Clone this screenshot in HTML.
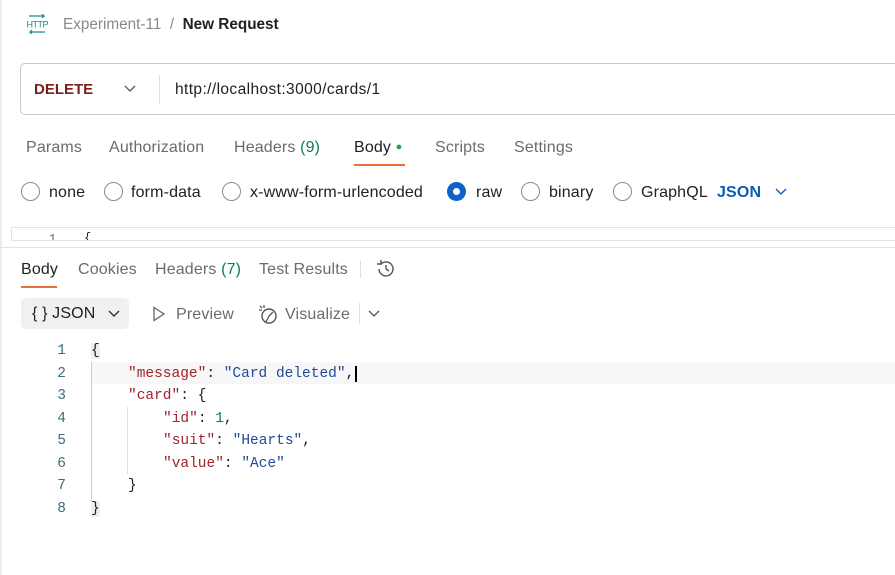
<!DOCTYPE html>
<html><head><style>
*{margin:0;padding:0;box-sizing:border-box}
body{width:895px;height:575px;background:#fff;font-family:"Liberation Sans",sans-serif;color:#212121;position:relative;overflow:hidden;font-size:16px;letter-spacing:0.15px}
.a{position:absolute;white-space:nowrap}
.g{color:#6b6b6b}
.radio{position:absolute;width:19px;height:19px;border:1.5px solid #8a8a8a;border-radius:50%}
.code{font-family:"Liberation Mono","DejaVu Sans Mono",monospace;font-size:14.5px;letter-spacing:0}
.k{color:#a1232b}.s{color:#1f4b99}.n{color:#107a5b}
.ln{position:absolute;width:20px;text-align:right;left:46px;color:#3d6d80;font-family:"Liberation Mono",monospace;font-size:14.5px;letter-spacing:0}
</style></head><body>
<div class="a" style="left:0;top:0;width:2px;height:575px;background:#ececec"></div>
<svg class="a" style="left:26px;top:14px" width="22" height="20" viewBox="0 0 22 20"><path d="M3 2h15l-2-2M18 2l-2 2M19 18H4l2-2M4 18l2 2" stroke="#1a8a8a" fill="none" stroke-width="1.2"/><text x="0.5" y="13.5" font-size="9" font-family="Liberation Sans" fill="#1a8a8a" letter-spacing="-0.5">HTTP</text></svg>
<div class="a g" style="left:63px;top:16px;font-size:15.3px;letter-spacing:0;color:#8a8a8a">Experiment-11&nbsp;&nbsp;/&nbsp;&nbsp;<span style="color:#212121;font-weight:bold">New Request</span></div>
<div class="a" style="left:20px;top:63px;width:890px;height:52px;border:1px solid #c9c9c9;border-radius:5px"></div>
<div class="a" style="left:34px;top:81px;font-weight:bold;color:#7a1f1f;font-size:15px;letter-spacing:0">DELETE</div>
<svg class="a" style="left:124px;top:85px" width="12" height="8"><path d="M1 1l5 5 5-5" stroke="#555" fill="none" stroke-width="1.3"/></svg>
<div class="a" style="left:159px;top:75px;width:1px;height:29px;background:#ddd"></div>
<div class="a" style="left:175px;top:81px;font-size:15.5px;letter-spacing:0.4px">http://localhost:3000/cards/1</div>
<div class="a g" style="left:26px;top:139px">Params</div>
<div class="a g" style="left:109px;top:139px">Authorization</div>
<div class="a g" style="left:234px;top:139px">Headers <span style="color:#107a5b">(9)</span></div>
<div class="a" style="left:354px;top:139px">Body <span style="color:#1fa34a;font-size:11px;vertical-align:2px">●</span></div>
<div class="a" style="left:354px;top:164px;width:51px;height:2px;background:#e8703a"></div>
<div class="a g" style="left:435px;top:139px">Scripts</div>
<div class="a g" style="left:514px;top:139px">Settings</div>
<div class="radio" style="left:21px;top:182px"></div><div class="a" style="left:49px;top:184px">none</div>
<div class="radio" style="left:104px;top:182px"></div><div class="a" style="left:131px;top:184px">form-data</div>
<div class="radio" style="left:222px;top:182px"></div><div class="a" style="left:250px;top:184px">x-www-form-urlencoded</div>
<div class="a" style="left:447px;top:182px;width:19px;height:19px;border-radius:50%;background:#0b63c5"><div style="position:absolute;left:6px;top:6px;width:7px;height:7px;border-radius:50%;background:#fff"></div></div><div class="a" style="left:476px;top:184px">raw</div>
<div class="radio" style="left:521px;top:182px"></div><div class="a" style="left:549px;top:184px">binary</div>
<div class="radio" style="left:613px;top:182px"></div><div class="a" style="left:641px;top:184px">GraphQL</div>
<div class="a" style="left:717px;top:184px;color:#0b5cb8;font-weight:bold">JSON</div>
<svg class="a" style="left:775px;top:188px" width="12" height="8"><path d="M1 1l5 5 5-5" stroke="#0b5cb8" fill="none" stroke-width="1.3"/></svg>
<div class="a" style="left:11px;top:227px;width:890px;height:14px;border-top:1px solid #e4e4e4;border-bottom:1px solid #e4e4e4;border-left:1px solid #e4e4e4;overflow:hidden"><span class="code" style="position:absolute;left:37px;top:4px;font-size:12px;color:#3d6d80">1</span><span class="code" style="position:absolute;left:72px;top:3px;font-size:12px">{</span></div>
<div class="a" style="left:0;top:247px;width:895px;height:1px;background:#e4e4e4"></div>
<div class="a" style="left:21px;top:261px">Body</div>
<div class="a" style="left:21px;top:286px;width:36px;height:2px;background:#e8703a"></div>
<div class="a g" style="left:78px;top:261px">Cookies</div>
<div class="a g" style="left:155px;top:261px">Headers <span style="color:#107a5b">(7)</span></div>
<div class="a g" style="left:259px;top:261px">Test Results</div>
<div class="a" style="left:360px;top:261px;width:1px;height:17px;background:#ddd"></div>
<svg class="a" style="left:375px;top:258px" width="22" height="22" viewBox="0 0 22 22"><path d="M4 11a7 7 0 1 0 2-5M6 2v4H2" stroke="#555" fill="none" stroke-width="1.4"/><path d="M11 7v4l3 2" stroke="#555" fill="none" stroke-width="1.4"/></svg>
<div class="a" style="left:21px;top:298px;width:108px;height:31px;background:#f0f0f0;border-radius:5px"></div>
<div class="a" style="left:32px;top:305px;font-size:16px">{ } JSON</div>
<svg class="a" style="left:108px;top:310px" width="12" height="8"><path d="M1 1l5 5 5-5" stroke="#333" fill="none" stroke-width="1.4"/></svg>
<svg class="a" style="left:152px;top:306px" width="14" height="16"><path d="M2 1.5l10 6.5-10 6.5z" stroke="#666" fill="none" stroke-width="1.3"/></svg>
<div class="a g" style="left:176px;top:306px">Preview</div>
<svg class="a" style="left:257px;top:303px" width="22" height="22" viewBox="0 0 22 22"><circle cx="12" cy="13" r="7" stroke="#555" fill="none" stroke-width="1.4"/><path d="M12 13l4-4M12 13l-3 6M3 3l2 2M7 2v3M2 7h3" stroke="#555" fill="none" stroke-width="1.3"/></svg>
<div class="a g" style="left:285px;top:306px">Visualize</div>
<div class="a" style="left:359px;top:303px;width:1px;height:21px;background:#ddd"></div>
<svg class="a" style="left:368px;top:310px" width="12" height="8"><path d="M1 1l5 5 5-5" stroke="#555" fill="none" stroke-width="1.3"/></svg>
<div class="a" style="left:92px;top:362px;width:803px;height:22px;background:#f7f7f7"></div>
<div class="a" style="left:91px;top:362px;width:1px;height:148px;background:#ccc"></div>
<div class="a" style="left:127px;top:407px;width:1px;height:67px;background:#ddd"></div>
<div class="ln" style="top:343px">1</div><div class="ln" style="top:366px">2</div><div class="ln" style="top:388px">3</div><div class="ln" style="top:411px">4</div><div class="ln" style="top:433px">5</div><div class="ln" style="top:456px">6</div><div class="ln" style="top:478px">7</div><div class="ln" style="top:501px">8</div>
<div class="a code" style="left:91px;top:343px;background:#eee">{</div>
<div class="a code" style="left:128px;top:366px"><span class="k">"message"</span>: <span class="s">"Card deleted"</span>,<span style="border-left:2px solid #000;margin-left:1px"></span></div>
<div class="a code" style="left:128px;top:388px"><span class="k">"card"</span>: {</div>
<div class="a code" style="left:163px;top:411px"><span class="k">"id"</span>: <span class="n">1</span>,</div>
<div class="a code" style="left:163px;top:433px"><span class="k">"suit"</span>: <span class="s">"Hearts"</span>,</div>
<div class="a code" style="left:163px;top:456px"><span class="k">"value"</span>: <span class="s">"Ace"</span></div>
<div class="a code" style="left:128px;top:478px">}</div>
<div class="a code" style="left:91px;top:501px;background:#eee">}</div>
</body></html>
